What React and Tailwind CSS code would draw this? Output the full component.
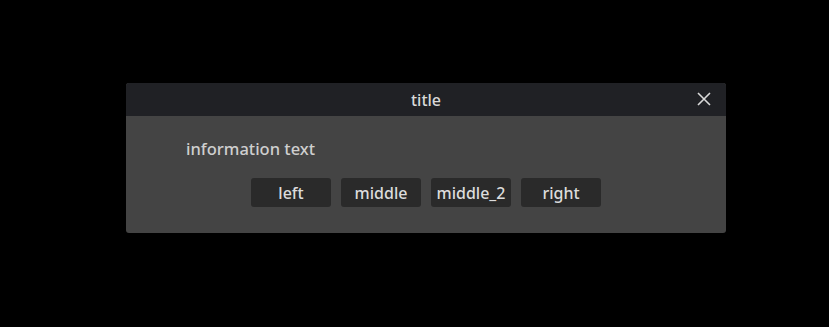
import React from "react";

const buttons = ["left", "middle", "middle_2", "right"];

export default function App() {
  return (
    <div className="w-[829px] h-[327px] bg-black flex items-start pl-[126px] pt-[83px] font-['Noto_Sans',sans-serif]">
      <div className="w-[600px] h-[150px] bg-[#444444] rounded-[3px] overflow-hidden flex flex-col">
        {/* title bar */}
        <div className="relative h-[33px] bg-[#202125] flex items-center justify-center">
          <span className="text-[16px] text-[#d9d9d9] font-medium">title</span>
          <button className="absolute right-[15px] top-[9px] text-[#d9d9d9]">
            <svg width="14" height="14" viewBox="0 0 14 14" fill="none" stroke="currentColor" strokeWidth="1.6">
              <path d="M1 1 L13 13 M13 1 L1 13" />
            </svg>
          </button>
        </div>
        {/* body */}
        <div className="flex-1 flex flex-col px-[60px] pt-[21px]">
          <p className="text-[16.5px] text-[#cfcfcf] leading-[24px] font-medium">information text</p>
          <div className="flex justify-center gap-[10px] mt-[17px]">
            {buttons.map((b) => (
              <button
                key={b}
                className="w-[80px] h-[29px] bg-[#2a2a2a] rounded-[3px] text-[16px] font-medium text-[#dcdcdc] leading-none"
              >
                {b}
              </button>
            ))}
          </div>
        </div>
      </div>
    </div>
  );
}
